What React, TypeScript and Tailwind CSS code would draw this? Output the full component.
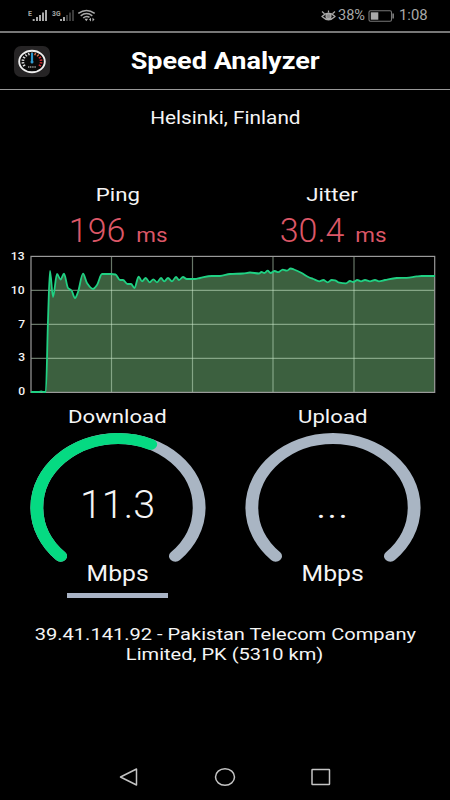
import React from "react";

const SAMPLES: [number, number][] = [
  [31, 392], [39, 392], [41.5, 391.4], [43.5, 392], [45.8, 392], [48, 320], [50, 271], [53, 297], [57, 274],
  [60.5, 279.5], [64, 273.7], [68, 288], [71.5, 290.5], [75, 298], [78, 292], [83, 273.7], [87, 283],
  [93, 289], [97, 285], [102, 274], [111, 274], [115.5, 274.5], [120, 280], [123, 280], [127.5, 284],
  [131, 284], [134.5, 288], [138.6, 276.6], [142, 281.3], [145.7, 278], [149.7, 282.3], [153.3, 279.3],
  [157, 282.3], [161, 278], [164.3, 281.3], [168, 278], [172, 281.3], [176, 277], [179, 280], [183, 277],
  [186.7, 279], [195, 279], [200, 278], [211.7, 276], [220, 276], [230, 274], [243, 273.5], [250, 272.5],
  [259, 273.5], [261.5, 272], [264.3, 273], [267.7, 270.7], [270.5, 273], [274.7, 271], [278.3, 272.2],
  [282.7, 269.6], [286.7, 270.7], [290.7, 268.5], [294, 269.5], [301.7, 273], [308.3, 277], [313.3, 279],
  [319.3, 281.3], [323.3, 280], [327.7, 282.3], [331.7, 280], [335, 280.3], [338.3, 282.3], [346, 283.3],
  [350, 281], [353.3, 282], [357.3, 280], [361, 281.3], [365, 280], [370, 281.3], [375, 280], [379, 281.3],
  [385, 280], [396.7, 278], [406.7, 277.8], [416.7, 276.4], [421.7, 276], [435, 276],
];

function smoothPath(points: [number, number][]) {
  const slope = (i: number) => (points[i + 1][1] - points[i][1]) / (points[i + 1][0] - points[i][0]);
  const tangents = points.map((_, i) => {
    if (i === 0 || i === points.length - 1) return 0;
    const a = slope(i - 1);
    const b = slope(i);
    return a * b <= 0 ? 0 : (2 * a * b) / (a + b);
  });
  let d = `M${points[0][0]} ${points[0][1]}`;
  for (let i = 0; i < points.length - 1; i++) {
    const [x0, y0] = points[i];
    const [x1, y1] = points[i + 1];
    const h = (x1 - x0) / 3;
    d += `C${x0 + h} ${y0 + tangents[i] * h} ${x1 - h} ${y1 - tangents[i + 1] * h} ${x1} ${y1}`;
  }
  return d;
}

const LINE = smoothPath(SAMPLES);

function Wide({ children }: { children: React.ReactNode }) {
  return <span className="inline-block scale-x-[1.167] whitespace-pre">{children}</span>;
}

function StatusBar() {
  return (
    <div className="flex h-[31px] items-center justify-between pr-[22px] pl-7 text-[#a9a9a9]">
      <svg width="70" height="16" viewBox="28 8 70 16" className="font-bold">
        <text x="28" y="15.5" fontSize="7" fill="#a4a4a4">E</text>
        <g fill="#a9a9a9">
          <rect x="32.7" y="19" width="2" height="2" />
          <rect x="36" y="17" width="2" height="4" />
          <rect x="39" y="15" width="2" height="6" />
          <rect x="42" y="12.5" width="2" height="8.5" />
          <rect x="45" y="10" width="2" height="11" />
          <rect x="60" y="19" width="2" height="2" />
          <rect x="63" y="17" width="2" height="4" />
        </g>
        <text x="52" y="15.5" fontSize="7" fill="#a4a4a4" textLength="8.5" lengthAdjust="spacingAndGlyphs">3G</text>
        <g fill="#3b3b3b">
          <rect x="66" y="15" width="2" height="6" />
          <rect x="69" y="12.5" width="2" height="8.5" />
          <rect x="72" y="10" width="2" height="11" />
        </g>
        <g fill="none" stroke="#a9a9a9" strokeWidth="1.5">
          <path d="M78.3 13.4Q86.5 7.4 94.7 13.4" />
          <path d="M80.7 15.8Q86.5 11.4 92.3 15.8" />
          <path d="M83.2 18Q86.5 15.2 89.5 17.4" />
        </g>
        <path d="M84.500 18.800h3.600l-1.800 2.500zM89 19.600l2-1.900v3.800zM94.500 19.600l-2-1.900v3.800z" fill="#b4b4b4" />
      </svg>
      <div className="flex items-center text-[14px]">
        <svg width="16" height="13" viewBox="0 0 16 13" fill="none" stroke="#a9a9a9" strokeWidth="1.2">
          <path d="M1 7.5Q7.500 1 14 7.500Q7.500 14 1 7.500Z" />
          <circle cx="7.5" cy="7.2" r="2.5" fill="#8a8a8a" />
          <path d="M3.500 4.800L1 2.500M11.500 4.800L14 2.500M7.500 3.500V1.500" />
        </svg>
        <span className="ml-px inline-block w-[29px] origin-left scale-x-[1.04]">38%</span>
        <svg width="27" height="12" viewBox="0 0 27 12" className="mr-1 ml-px">
          <rect x="1" y="0.7" width="22.5" height="10.6" rx="1.5" fill="none" stroke="#777" strokeWidth="1.1" />
          <rect x="2.8" y="2.3" width="7.5" height="7.4" fill="#a9a9a9" />
          <rect x="24.3" y="3.5" width="1.7" height="5" fill="#777" />
        </svg>
        <span className="inline-block w-[29px] origin-left scale-x-[1.06]">1:08</span>
      </div>
    </div>
  );
}

function AppIcon() {
  const ticks = Array.from({ length: 13 }, (_, i) => {
    const a = ((-210 + i * 20) * Math.PI) / 180;
    return {
      x1: 18 + Math.cos(a) * 7.8, y1: 15.5 + Math.sin(a) * 6.7,
      x2: 18 + Math.cos(a) * 10.5, y2: 15.5 + Math.sin(a) * 9,
      color: i < 7 ? "#d8d8d8" : i < 9 ? "#d8704a" : "#d32a30",
    };
  });
  return (
    <svg width="36" height="31" viewBox="0 0 36 31">
      <rect width="36" height="31" rx="7" fill="#262425" />
      <ellipse cx="18" cy="15.5" rx="12.8" ry="10.8" fill="#080808" stroke="#eee" strokeWidth="1.9" />
      {ticks.map((t, i) => (
        <line key={i} x1={t.x1} y1={t.y1} x2={t.x2} y2={t.y2} stroke={t.color} strokeWidth="1.4" />
      ))}
      <path d="M18 7V16" stroke="#2a95cc" strokeWidth="2.2" />
      <circle cx="18" cy="16" r="1.5" fill="#2f9ad0" />
      <path d="M14 21H22" stroke="#999" strokeWidth="1.3" strokeDasharray="1.2 .6" />
    </svg>
  );
}

function Metric({ label, value }: { label: string; value: string }) {
  return (
    <div className="flex flex-col items-center">
      <div className="h-6 text-[19px] leading-6"><Wide>{label}</Wide></div>
      <div className="mt-[3px] flex h-10 items-baseline leading-10 whitespace-pre text-[#dc5767]">
        <span className="text-[34px] font-light">{value}</span>
        <span className="ml-[13px] inline-block scale-x-[1.12] text-[20px]">ms</span>
      </div>
    </div>
  );
}

function SpeedChart() {
  return (
    <div className="flex h-[144px]">
      <div className="flex w-[25px] flex-col items-end justify-between pt-px text-[11px] leading-[8px] font-medium">
        {["13", "10", "7", "3", "0"].map((label) => (
          <span key={label} className="inline-block origin-right scale-x-[1.1]">{label}</span>
        ))}
      </div>
      <svg width="410" height="144" viewBox="27 252 410 144" className="ml-0.5">
        <path d={`${LINE}V392H31Z`} fill="#3c603f" />
        <g stroke="#cdeccd" strokeOpacity="0.5" strokeWidth="1.2">
          {[290.4, 324.4, 358.4].map((y) => <path key={y} d={`M31 ${y}H435`} />)}
          {[111.5, 192.5, 273, 354].map((x) => <path key={x} d={`M${x} 256V392`} />)}
        </g>
        <rect x="31" y="256.4" width="403.7" height="136" fill="none" stroke="#9a9a9a" strokeWidth="1.2" />
        <path d={LINE} fill="none" stroke="#20d183" strokeWidth="1.8" strokeLinejoin="round" />
      </svg>
    </div>
  );
}

function Gauge({ label, progress, active, children }: { label: string; progress: number; active?: boolean; children: React.ReactNode }) {
  const arc = "M-48.700 48.700A68.900 68.900 0 1 1 48.700 48.700";
  return (
    <div className="flex flex-col items-center">
      <div className="h-6 text-[19px] leading-6"><Wide>{label}</Wide></div>
      <div className="mt-0.5 grid h-[132px] w-[180px] place-items-center">
        <svg width="180" height="132" viewBox="-90 -76.5 180 132" className="col-start-1 row-start-1">
          <g transform="scale(1.178 1)" fill="none" strokeWidth="10.9" strokeLinecap="round">
            <path d={arc} stroke="#a9b5c3" />
            {progress > 0 && <path d={arc} stroke="#05da82" pathLength={100} strokeDasharray={`${progress} 200`} />}
          </g>
        </svg>
        <div className="col-start-1 row-start-1 mt-[15px] text-[39.5px] leading-10 font-light">{children}</div>
      </div>
      <div className="-mt-[3px] h-7 text-[21.2px] leading-7"><Wide>Mbps</Wide></div>
      <div className={active ? "mt-[5px] h-[5px] w-[101px] bg-[#a9b3c5]" : "mt-[5px] h-[5px] w-[101px]"} />
    </div>
  );
}

export default function App() {
  return (
    <div className="flex h-[800px] w-[450px] flex-col overflow-hidden bg-black font-['Roboto','Liberation_Sans',sans-serif] text-[#f5f5f5]">
      <StatusBar />
      <header className="grid h-[59px] grid-cols-[50px_1fr_50px] items-center border-t-2 border-b border-t-[#777] border-b-[#999]">
        <div className="flex justify-end"><AppIcon /></div>
        <h1 className="pt-0.5 text-center text-[23.5px] font-bold text-white">
          <span className="inline-block scale-x-[1.15]">Speed Analyzer</span>
        </h1>
      </header>
      <div className="mt-4 h-6 text-center text-[17.8px] leading-6"><Wide>Helsinki, Finland</Wide></div>
      <div className="mt-[53px] grid h-[69px] grid-cols-2 px-[10px]">
        <Metric label="Ping" value="196" />
        <Metric label="Jitter" value="30.4" />
      </div>
      <SpeedChart />
      <div className="mt-[9px] grid h-[195px] grid-cols-2 px-[10px]">
        <Gauge label="Download" progress={58.8} active>11.3</Gauge>
        <Gauge label="Upload" progress={0}><Wide>...</Wide></Gauge>
      </div>
      <footer className="mt-6 text-center text-[17.2px] leading-5">
        <div><Wide>39.41.141.92 - Pakistan Telecom Company</Wide></div>
        <div><Wide>Limited, PK (5310 km)</Wide></div>
      </footer>
      <nav className="mt-auto flex h-[46px] items-center justify-between px-[119px]">
        <svg width="20" height="20" viewBox="0 0 20 20" fill="none" stroke="#c4c4c4" strokeWidth="1.5"><path d="M17.500 2V18L1.500 10Z" strokeLinejoin="round" /></svg>
        <svg width="22" height="20" viewBox="0 0 22 20" fill="none" stroke="#c4c4c4" strokeWidth="1.5"><ellipse cx="11" cy="10" rx="9.5" ry="8.3" /></svg>
        <svg width="20" height="20" viewBox="0 0 20 20" fill="none" stroke="#c4c4c4" strokeWidth="1.5"><rect x="1" y="2.5" width="17.500" height="15" rx=".5" /></svg>
      </nav>
    </div>
  );
}
